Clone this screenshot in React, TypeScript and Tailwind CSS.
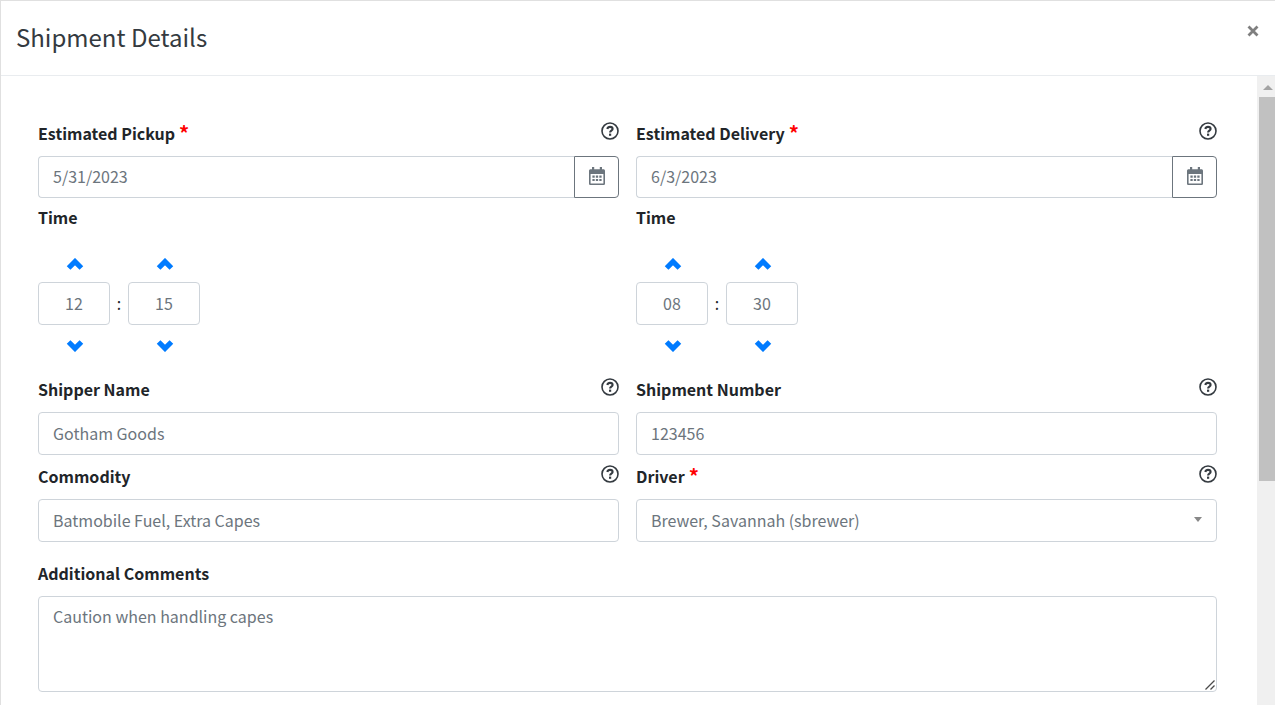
import type { ReactNode } from "react";

function HelpButton({ about }: { about: string }) {
  return (
    <button type="button" aria-label={`Help: ${about}`} className="mb-1 text-[#343a40]">
      <svg viewBox="0 0 18 18" className="size-[18px]" fill="none" stroke="currentColor">
        <circle cx="9" cy="9" r="8" strokeWidth="1.6" />
        <path d="M6.3 7 C6.7 5.6 7.7 4.9 9 4.9 C10.5 4.9 11.6 5.8 11.6 7 C11.6 8.7 9.1 8.7 9.1 10.5" strokeWidth="2.1" />
        <path d="M8 11.6 H10.2 V13.8 H8 Z" fill="currentColor" stroke="none" />
      </svg>
    </button>
  );
}

function Chevron({ down = false }: { down?: boolean }) {
  return (
    <svg viewBox="0 0 18 12" className="h-3 w-[18px]" fill="none" stroke="currentColor" strokeWidth="5.2">
      <path d={down ? "M2.6 2 L9 8.4 L15.4 2" : "M2.6 10 L9 3.6 L15.4 10"} />
    </svg>
  );
}

function CalendarIcon() {
  return (
    <svg viewBox="0 0 16 18" className="h-[18px] w-4" fill="currentColor">
      <path
        fillRule="evenodd"
        d="M3 0h2.200v2.200h5.600V0H13v2.200h1.400C15.300 2.200 16 2.900 16 3.800V16.400C16 17.300 15.300 18 14.400 18H1.600C.7 18 0 17.300 0 16.400V3.800C0 2.900.7 2.200 1.600 2.200H3ZM1.600 6.900V16.400H14.400V6.900Z"
      />
      <path d="M3.400 8.600h2.300v2.100h-2.300zM6.850 8.600h2.300v2.100h-2.300zM10.300 8.600h2.300v2.100h-2.300zM3.400 12h2.300v2.100h-2.300zM6.850 12h2.300v2.100h-2.300zM10.300 12h2.300v2.100h-2.300z" />
    </svg>
  );
}

const control =
  "w-full min-w-0 rounded border border-[#ced4da] bg-white px-3.5 pb-0.5 text-[16px] leading-6 text-[#6c757d] outline-none";

function LabelRow({ id, label, required = false, help = false }: { id: string; label: string; required?: boolean; help?: boolean }) {
  return (
    <div className="flex h-11 items-center justify-between pb-0.5">
      <label htmlFor={id} className="flex gap-1 font-bold">
        {label}
        {required && <span className="text-[20px] leading-6 text-[#ff0000]">*</span>}
      </label>
      {help && <HelpButton about={label} />}
    </div>
  );
}

function Field({ id, label, required, children }: { id: string; label: string; required?: boolean; children: ReactNode }) {
  return (
    <div>
      <LabelRow id={id} label={label} required={required} help />
      {children}
    </div>
  );
}

function TextField({ id, label, value }: { id: string; label: string; value: string }) {
  return (
    <Field id={id} label={label}>
      <input id={id} defaultValue={value} className={`${control} h-[43px]`} />
    </Field>
  );
}

function Spinner({ name, value }: { name: string; value: string }) {
  return (
    <div className="flex w-[72px] flex-col">
      <button type="button" aria-label={`Increment ${name}`} className="flex h-9 items-center justify-center pl-0.5 text-[#007bff]">
        <Chevron />
      </button>
      <input aria-label={name} defaultValue={value} className={`${control} h-[43px] text-center`} />
      <button type="button" aria-label={`Decrement ${name}`} className="flex h-[43px] items-center justify-center pb-0.5 pl-0.5 text-[#007bff]">
        <Chevron down />
      </button>
    </div>
  );
}

function DateTimeField({ id, label, date, hour, minute }: { id: string; label: string; date: string; hour: string; minute: string }) {
  return (
    <Field id={id} label={label} required>
      <div className="flex">
        <input id={id} defaultValue={date} className={`${control} h-[42px] rounded-r-none border-r-0`} />
        <button
          type="button"
          aria-label={`Choose ${label}`}
          className="flex h-[42px] w-[45px] shrink-0 items-center justify-center rounded-r border border-[#6c757d] pb-0.5 text-[#6c757d]"
        >
          <CalendarIcon />
        </button>
      </div>
      <fieldset>
        <legend className="flex h-10 items-center pb-0.5 font-bold">Time</legend>
        <div className="flex pt-2">
          <Spinner name="Hours" value={hour} />
          <span className="w-[18px] pt-[45px] text-center">:</span>
          <Spinner name="Minutes" value={minute} />
        </div>
      </fieldset>
    </Field>
  );
}

function Scrollbar() {
  return (
    <div aria-hidden="true" className="flex w-[18px] shrink-0 flex-col bg-[#f0f0f0] pl-0.5">
      <div className="flex h-[21px] shrink-0 items-center justify-center pt-0.5 pl-0.5">
        <svg viewBox="0 0 10 5" className="h-[5px] w-2.5" fill="#a3a3a3">
          <path d="M0 5 L5 0 L10 5 Z" />
        </svg>
      </div>
      <div className="h-[61%] bg-[#c1c1c1]" />
    </div>
  );
}

export default function App() {
  return (
    <div
      role="dialog"
      aria-labelledby="dialog-title"
      className="flex h-screen flex-col overflow-hidden border-t border-l border-[#e0e0e0] bg-white font-['Noto_Sans_CJK_SC',sans-serif] text-[16px] leading-6 text-[#212529]"
    >
      <header className="flex shrink-0 items-start justify-between border-b border-[#e9ecef] pt-[18px] pr-3 pb-5 pl-[15px]">
        <h1 id="dialog-title" className="text-[24px] leading-9 text-[#343a40]">
          Shipment Details
        </h1>
        <button type="button" aria-label="Close" className="flex h-6 w-5 items-center justify-center text-[#7f7f7f]">
          <svg viewBox="0 0 12 12" className="size-3" fill="none" stroke="currentColor" strokeWidth="2.8">
            <path d="M1.500 1.500 L10.500 10.500 M10.500 1.500 L1.500 10.500" />
          </svg>
        </button>
      </header>
      <div className="flex min-h-0 flex-1">
        <form className="min-w-0 flex-1 overflow-hidden pt-9 pr-10 pl-[37px]">
          <div className="grid grid-cols-2 gap-x-[17px]">
            <DateTimeField id="pickup" label="Estimated Pickup" date="5/31/2023" hour="12" minute="15" />
            <DateTimeField id="delivery" label="Estimated Delivery" date="6/3/2023" hour="08" minute="30" />
            <TextField id="shipper" label="Shipper Name" value="Gotham Goods" />
            <TextField id="number" label="Shipment Number" value="123456" />
            <TextField id="commodity" label="Commodity" value="Batmobile Fuel, Extra Capes" />
            <Field id="driver" label="Driver" required>
              <div className="relative">
                <select id="driver" className={`${control} h-[43px] appearance-none`}>
                  <option>Brewer, Savannah (sbrewer)</option>
                </select>
                <svg viewBox="0 0 8 5" className="pointer-events-none absolute top-[18px] right-[15px] h-[5px] w-2" fill="#888888">
                  <path d="M0 0 H8 L4 5 Z" />
                </svg>
              </div>
            </Field>
          </div>
          <div className="pt-2.5">
            <LabelRow id="comments" label="Additional Comments" />
            <div className="relative">
              <textarea id="comments" defaultValue="Caution when handling capes" className={`${control} block h-24 resize-none pt-[7px]`} />
              <svg
                viewBox="0 0 10 10"
                className="pointer-events-none absolute right-0.5 bottom-0.5 size-2.5"
                fill="none"
                stroke="#4a4a4a"
                strokeWidth="1.3"
              >
                <path d="M0.500 9.500 L9.500 0.500 M5.500 9.500 L9.500 5.500" />
              </svg>
            </div>
          </div>
        </form>
        <Scrollbar />
      </div>
    </div>
  );
}
